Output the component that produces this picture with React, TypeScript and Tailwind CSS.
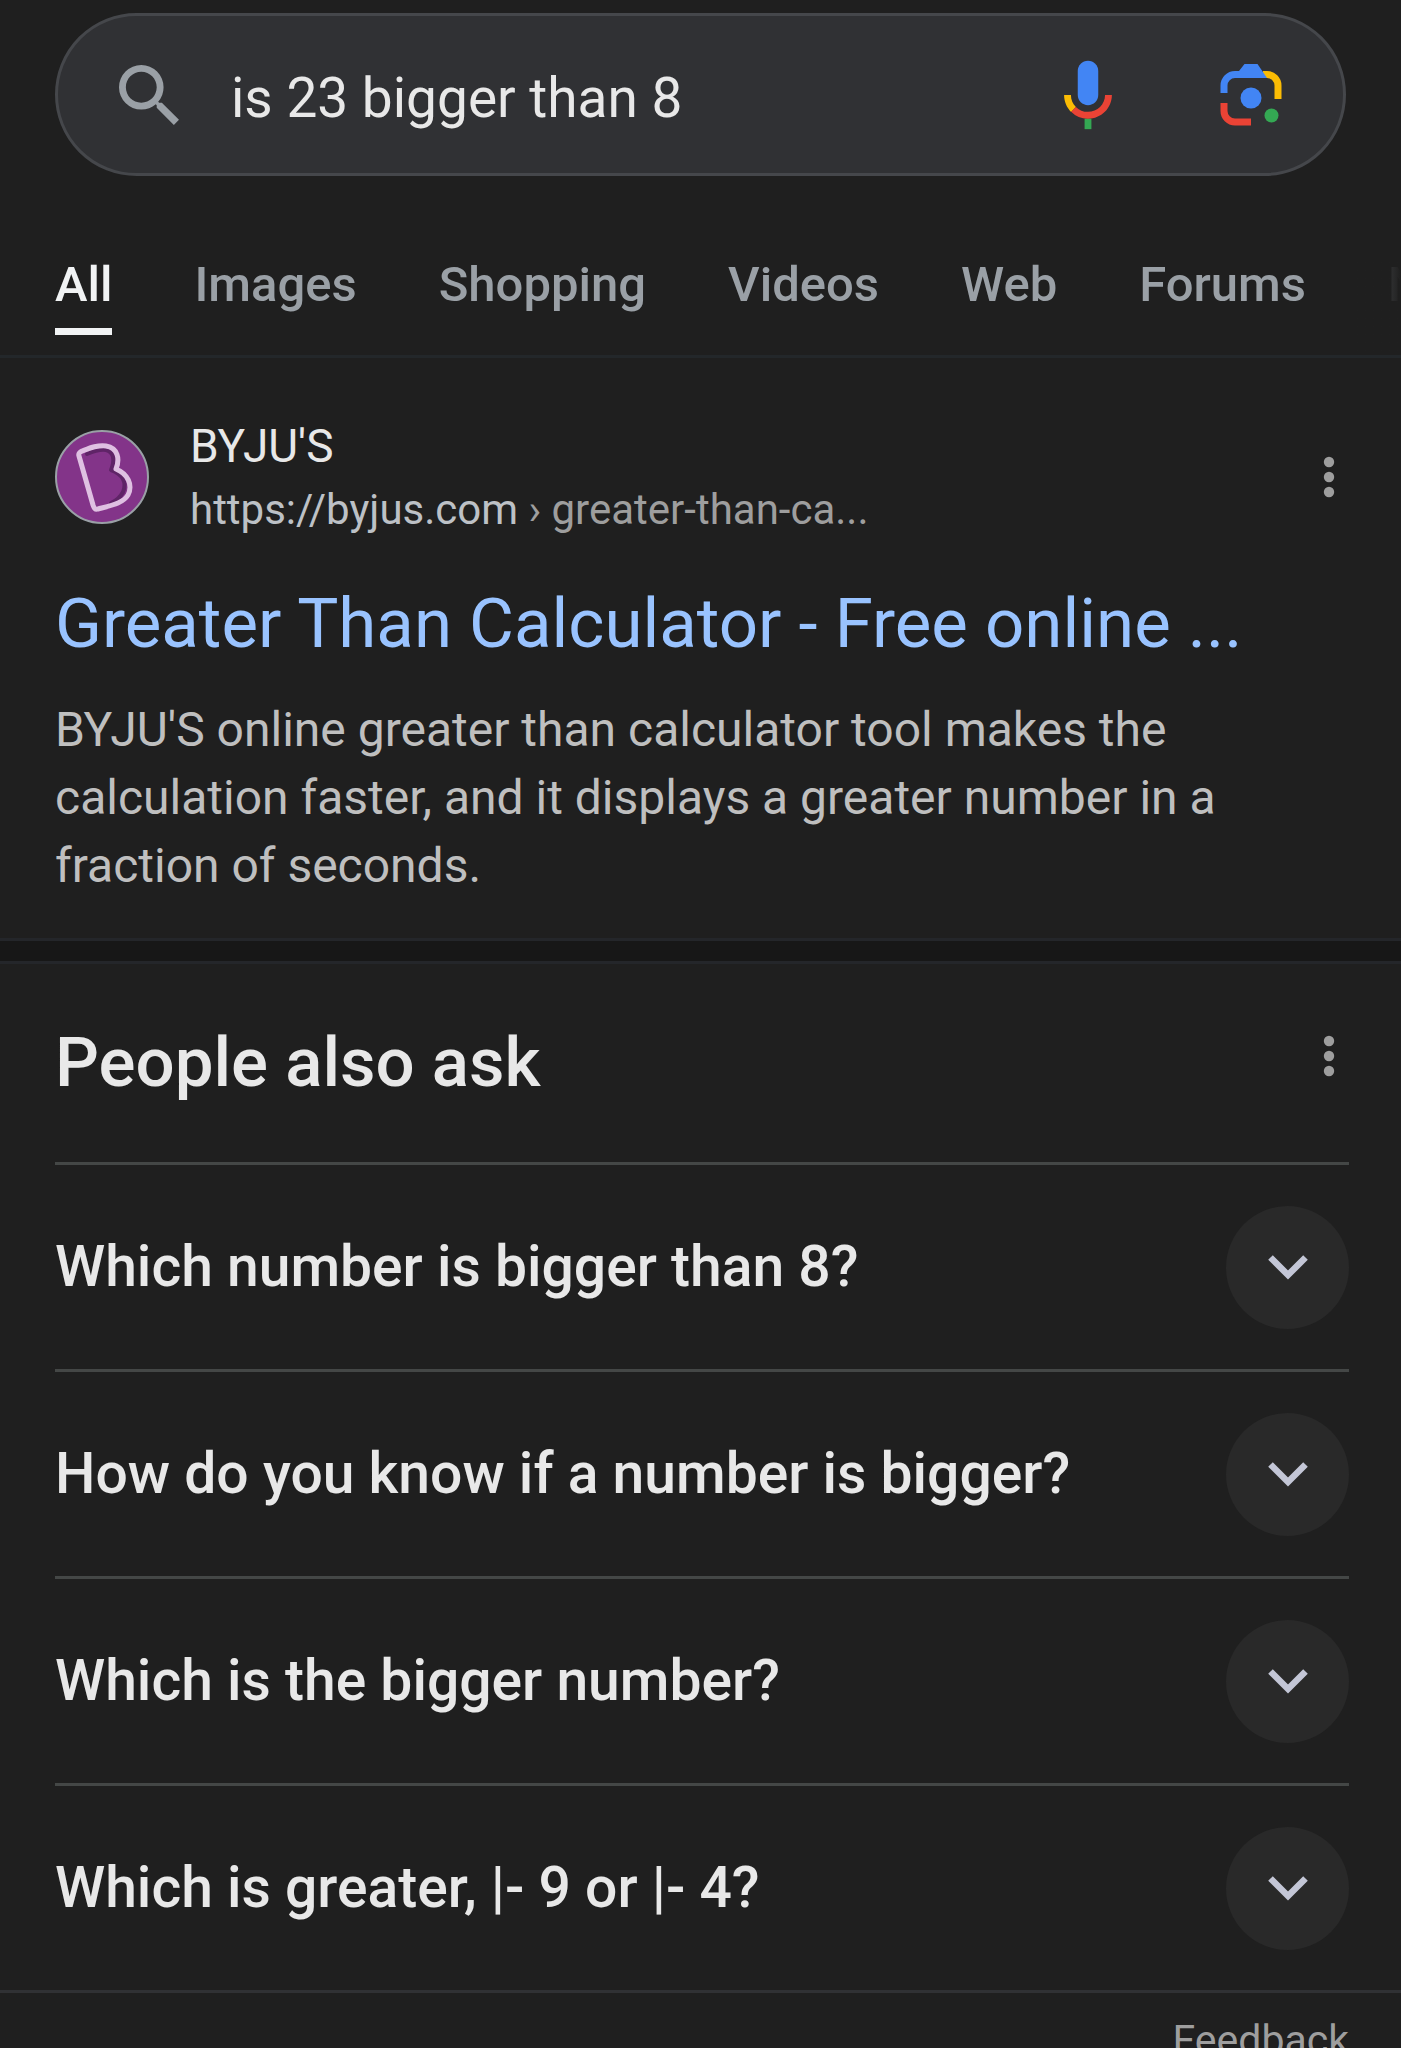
const tabs = ['All', 'Images', 'Shopping', 'Videos', 'Web', 'Forums', 'News']

const questions = [
  'Which number is bigger than 8?',
  'How do you know if a number is bigger?',
  'Which is the bigger number?',
  'Which is greater, |- 9 or |- 4?',
]

function SearchIcon() {
  return (
    <svg viewBox="3 3 17.5 17.5" className="size-15 fill-[#9aa0a6]" aria-hidden="true">
      <path d="M15.5 14h-.79l-.28-.27A6.471 6.471 0 0 0 16 9.5 6.5 6.5 0 1 0 9.5 16c1.61 0 3.09-.59 4.23-1.57l.27.28v.79l5 4.99L20.49 19l-4.99-5zm-6 0C7.01 14 5 11.99 5 9.5S7.01 5 9.5 5 14 7.01 14 9.5 11.99 14 9.5 14z" />
    </svg>
  )
}

function MicIcon() {
  return (
    <svg viewBox="0 0 24 24" className="size-[82px]" aria-hidden="true">
      <path fill="#4285f4" d="M12 15c1.66 0 3-1.31 3-2.97V4.97C15 3.31 13.66 2 12 2S9 3.31 9 4.97v7.06C9 13.69 10.34 15 12 15z" />
      <path fill="#34a853" d="M11 18.9h2V22h-2z" />
      <path fill="#fbbc04" d="M7 12H5c0 1.93.78 3.68 2.05 4.95l1.41-1.41C7.56 14.63 7 13.38 7 12z" />
      <path fill="#ea4335" d="M12 16.93a4.97 4.97 0 0 1-3.54-1.45l-1.41 1.41A6.89 6.89 0 0 0 12 18.94c3.87 0 6.99-3.07 6.99-6.94h-2c0 2.76-2.23 4.93-4.99 4.93z" />
    </svg>
  )
}

function LensIcon() {
  return (
    <svg viewBox="0 0 62 62" className="size-[62px]" fill="none" aria-hidden="true">
      <path stroke="#fbbc04" strokeWidth="7" d="M43 10.5h4a11 11 0 0 1 11 11V35" />
      <path stroke="#4285f4" strokeWidth="7" d="M4 29v-7.5a11 11 0 0 1 11-11h6" />
      <path fill="#4285f4" d="M18 7h1l5.500-7h13L47 14H18z" />
      <path stroke="#ea4335" strokeWidth="7" d="M4 39v8a11 11 0 0 0 11 11h16" />
      <circle cx="31" cy="34" r="10.5" fill="#4285f4" />
      <circle cx="51.5" cy="51.5" r="7" fill="#34a853" />
    </svg>
  )
}

function Dots() {
  return (
    <svg viewBox="0 0 12 42" className="h-[42px] w-3 fill-[#9e9e9e]" aria-hidden="true">
      <circle cx="6" cy="6" r="5.2" />
      <circle cx="6" cy="21" r="5.2" />
      <circle cx="6" cy="36" r="5.2" />
    </svg>
  )
}

function Favicon() {
  return (
    <svg viewBox="0 0 94 94" className="size-[94px] shrink-0" fill="none" aria-hidden="true">
      <circle cx="47" cy="47" r="46" fill="#833489" stroke="#9aa0a6" strokeWidth="2" />
      <g strokeLinejoin="round" strokeLinecap="round">
        <path stroke="#5f2467" strokeWidth="4" d="M32 24c7-3 13-5 19-4 8 2 9 10 5 20 12 4 16 13 12 22-3 6-7 9-12 11" />
        <path
          stroke="#dfc0e2"
          strokeWidth="5"
          d="M27 21c8-3 15-6 24-5 12 2 14 13 10 23 12 5 17 16 12 26-5 8-15 10-30 14-3 1-4-1-5-4L24 26c-1-3 1-4 3-5z"
        />
      </g>
    </svg>
  )
}

export default function App() {
  return (
    <div className="min-h-screen overflow-hidden bg-[#1f1f1f] font-[Roboto,sans-serif] text-[#e8e8e8]">
      <header>
        <div className="px-[55px] pt-[13px]">
          <form className="flex h-[163px] items-center rounded-full border-[3px] border-[#45474b] bg-[#303134] px-[61px]">
            <SearchIcon />
            <input
              type="text"
              aria-label="Search"
              defaultValue="is 23 bigger than 8"
              className="ml-[52px] min-w-0 flex-1 bg-transparent pt-2 text-[55px] text-[#e8e8e8] outline-none"
            />
            <button type="button" aria-label="Search by voice">
              <MicIcon />
            </button>
            <button type="button" aria-label="Search by image" className="ml-[91px]">
              <LensIcon />
            </button>
          </form>
        </div>

        <nav className="relative mt-[77px] flex gap-[82px] overflow-hidden border-b-[3px] border-[#23272a] pl-[55px] text-[49px] font-medium text-[#9aa0a6]">
          {tabs.map((tab) => (
            <a
              key={tab}
              href="#"
              className={
                tab === 'All'
                  ? 'mb-5 shrink-0 border-b-[7px] border-[#f1f3f4] pb-[11px] leading-[64px] text-[#f1f3f4]'
                  : 'shrink-0 leading-[64px]'
              }
            >
              {tab}
            </a>
          ))}
          <div className="absolute inset-y-0 right-0 w-20 bg-linear-to-r from-transparent to-[#1f1f1f]" />
        </nav>
      </header>

      <main>
        <article className="pt-[53px] pr-[52px] pb-[38px] pl-[55px]">
          <div className="flex items-center">
            <Favicon />
            <div className="ml-[41px] min-w-0 flex-1 pt-[3px]">
              <div className="text-[46px] leading-[64px]">BYJU'S</div>
              <div className="truncate text-[42px] leading-[64px] text-[#bdc1c6]">
                https://byjus.com<span className="text-[#9e9e9e]"> › greater-than-ca...</span>
              </div>
            </div>
            <button type="button" aria-label="About this result" className="mr-3.5">
              <Dots />
            </button>
          </div>
          <h2 className="mt-10 truncate text-[69px] leading-[84px] text-[#99c3ff]">
            <a href="#">Greater Than Calculator - Free online ...</a>
          </h2>
          <p className="mt-[30px] text-[48px] leading-[68px] text-[#bfbfbf]">
            BYJU'S online greater than calculator tool makes the calculation faster, and it displays a greater number in a
            fraction of seconds.
          </p>
        </article>

        <div className="h-[26px] border-y-[3px] border-[#24262a] bg-[#171717]" />

        <section className="pr-[52px] pl-[55px]">
          <div className="flex items-start justify-between pt-[57px] pb-[57px]">
            <h2 className="text-[69px] leading-[84px] font-medium">People also ask</h2>
            <button type="button" aria-label="About people also ask" className="mt-3.5 mr-3.5">
              <Dots />
            </button>
          </div>
          {questions.map((question) => (
            <div key={question} className="flex h-[207px] items-center justify-between border-t-[3px] border-[#444746]">
              <h3 className="text-[57px] leading-[64px] font-medium">{question}</h3>
              <button
                type="button"
                aria-label={question}
                className="flex size-[123px] shrink-0 items-center justify-center rounded-full bg-[#292929]"
              >
                <svg viewBox="0 0 42 26" className="h-[26px] w-[42px]" fill="none" aria-hidden="true">
                  <path stroke="#c3c6d6" strokeWidth="6.5" d="M3.5 3.5 21 21 38.5 3.5" />
                </svg>
              </button>
            </div>
          ))}
        </section>
      </main>

      <footer className="border-t-[3px] border-[#303134] pt-[15px] pr-[52px] text-right text-[41px] leading-[64px] text-[#9e9e9e]">
        <a href="#">Feedback</a>
      </footer>
    </div>
  )
}
